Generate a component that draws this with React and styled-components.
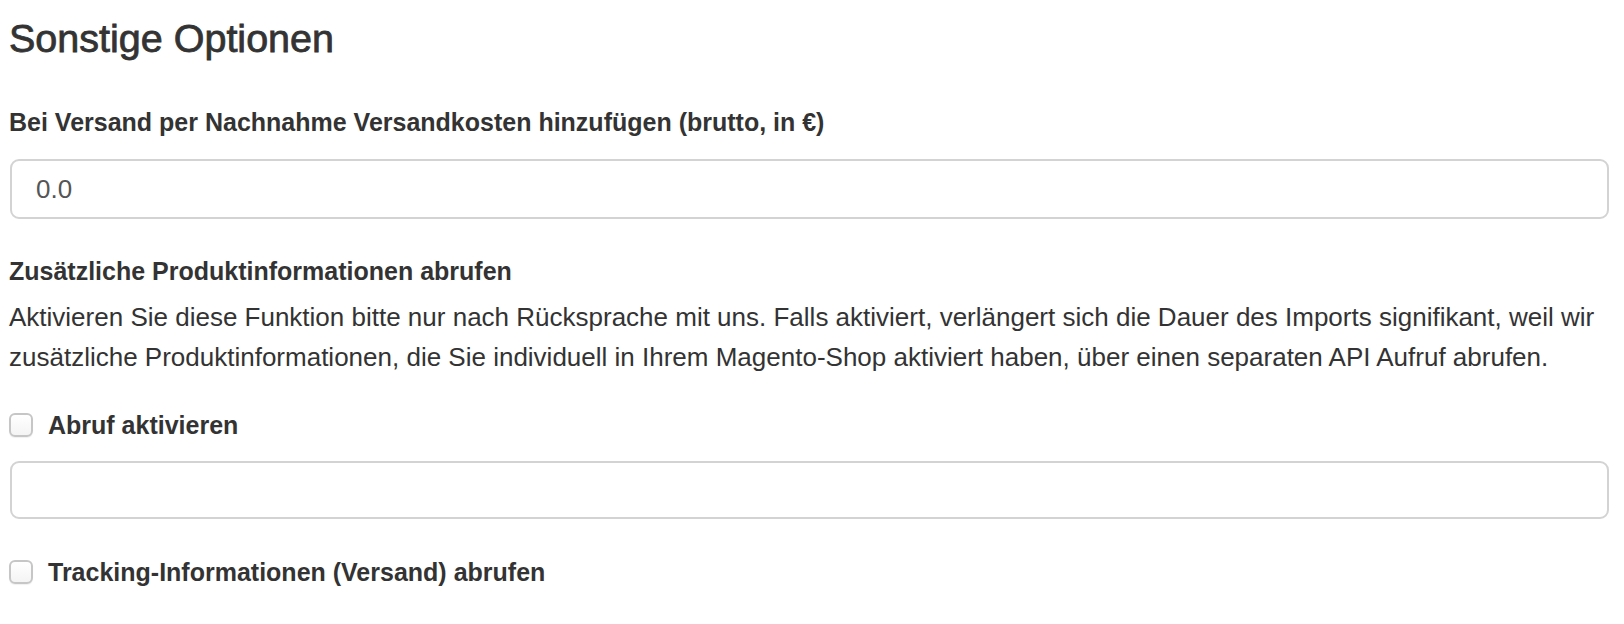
import React, { useState } from 'react';
import styled, { createGlobalStyle } from 'styled-components';

const GlobalStyle = createGlobalStyle`
  body {
    margin: 0;
    background: #fff;
    font-family: "Liberation Sans", Arial, Helvetica, sans-serif;
    color: #333;
  }
`;

// Styled components
const Page = styled.div`
  width: 1599px;
  padding: 16px 0 0 9px;
`;

const Title = styled.h3`
  margin: 0 0 42px;
  font-size: 39.5px;
  line-height: 44px;
  font-weight: 400;
  color: #333;
  -webkit-text-stroke: 0.8px #333;
`;

const Label = styled.label`
  display: block;
  font-size: 25px;
  line-height: 40px;
  font-weight: 700;
  color: #333;
`;

const Input = styled.input`
  display: block;
  box-sizing: border-box;
  width: 100%;
  height: ${(p) => (p.$tall ? 60 : 58)}px;
  margin: ${(p) => (p.$tall ? 17 : 16)}px 0 0 1px;
  padding: 0 24px;
  border: 2px solid #d3d3d3;
  border-radius: 9px;
  font-family: inherit;
  font-size: 26px;
  color: #555;
  background: #fff;
  outline: none;
`;

const Section = styled.div`
  margin-top: ${(p) => p.$top}px;
`;

const Help = styled.p`
  margin: 7px 0 0;
  font-size: 26px;
  line-height: 39.5px;
  color: #333;
`;

const CheckRow = styled.label`
  display: flex;
  align-items: center;
  gap: 15px;
  font-size: 25px;
  line-height: 40px;
  font-weight: 700;
  color: #333;
  cursor: pointer;
`;

const Box = styled.span`
  box-sizing: border-box;
  width: 24px;
  height: 24px;
  border: 2px solid #c6c6c6;
  border-radius: 6px;
  background: linear-gradient(#fff, #f4f4f4);
  box-shadow: 0 1px 1px rgba(0, 0, 0, 0.06);
  display: flex;
  align-items: center;
  justify-content: center;
  color: #333;
  font-size: 18px;
`;

function Checkbox({ label }) {
  const [checked, setChecked] = useState(false);
  return (
    <CheckRow onClick={() => setChecked(!checked)}>
      <Box>{checked ? '✓' : ''}</Box>
      {label}
    </CheckRow>
  );
}

export default function App() {
  const [cost, setCost] = useState('0.0');
  const [extra, setExtra] = useState('');

  return (
    <Page>
      <GlobalStyle />
      <Title>Sonstige Optionen</Title>

      <Label>Bei Versand per Nachnahme Versandkosten hinzufügen (brutto, in €)</Label>
      <Input $tall value={cost} onChange={(e) => setCost(e.target.value)} />

      <Section $top={32}>
        <Label>Zusätzliche Produktinformationen abrufen</Label>
        <Help>
          Aktivieren Sie diese Funktion bitte nur nach Rücksprache mit uns. Falls aktiviert, verlängert sich die Dauer des Imports signifikant, weil wir zusätzliche Produktinformationen, die Sie individuell in Ihrem Magento-Shop aktiviert haben, über einen separaten API Aufruf abrufen.
        </Help>
      </Section>

      <Section $top={28}>
        <Checkbox label="Abruf aktivieren" />
        <Input value={extra} onChange={(e) => setExtra(e.target.value)} />
      </Section>

      <Section $top={33}>
        <Checkbox label="Tracking-Informationen (Versand) abrufen" />
      </Section>
    </Page>
  );
}
